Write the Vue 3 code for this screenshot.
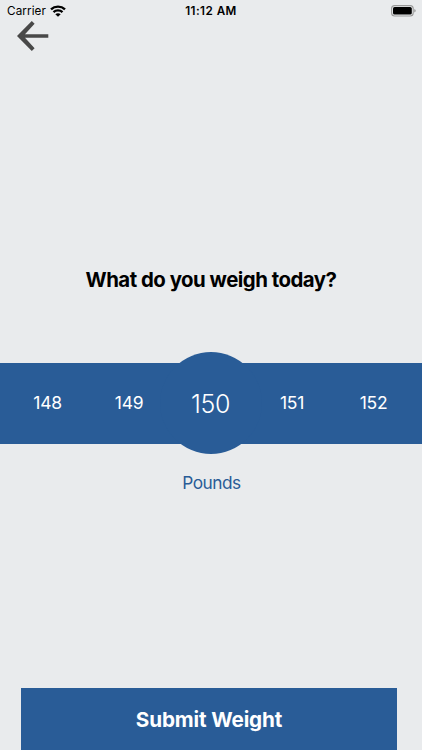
<script setup>
import { ref } from 'vue'

const weights = [148, 149, 150, 151, 152]
const selected = ref(150)
</script>

<template>
  <main class="screen">
    <header class="status">
      <div class="carrier">
        <span>Carrier</span>
        <svg class="wifi" viewBox="0 0 16 12" aria-hidden="true">
          <path d="M1 4.3C4.9.7 11.1.7 15 4.3" />
          <path d="M3.5 7.1C6 4.8 10 4.8 12.5 7.1" />
          <path class="dot" d="M8 11.8 5.3 9.2Q8 7.1 10.7 9.2Z" />
        </svg>
      </div>
      <span class="time">11:12 AM</span>
      <svg class="battery" viewBox="0 0 25 12" aria-hidden="true">
        <rect class="shell" x=".6" y=".6" width="21.6" height="10.4" rx="3" />
        <rect x="2" y="2" width="18.8" height="7.6" rx="1.6" />
        <path class="cap" d="M23.4 4.1q1.2.5 1.2 1.7t-1.2 1.7Z" />
      </svg>
    </header>
    <button class="back" aria-label="Back">
      <svg viewBox="0 0 32 30" aria-hidden="true">
        <path class="arrow" d="M14.8 0 17.6 2.8 8 13.2H31.3V16.8H8L17.6 27.2 14.8 30 0 15Z" />
      </svg>
    </button>
    <h1 class="title">What do you weigh today?</h1>
    <section class="picker">
      <div class="dial"></div>
      <div class="values">
        <button
          v-for="weight in weights"
          :key="weight"
          class="value"
          :class="{ active: weight === selected }"
          @click="selected = weight"
        >{{ weight }}</button>
      </div>
    </section>
    <p class="unit">Pounds</p>
    <button class="submit">Submit Weight</button>
  </main>
</template>

<style>
body {
  margin: 0;
  background: #e9ebed;
}
</style>

<style scoped>
.screen {
  display: flex;
  flex-direction: column;
  box-sizing: border-box;
  height: 750px;
  overflow: hidden;
  background: #e9ebed;
  color: #000;
  font-family: Inter, sans-serif;
}
button {
  padding: 0;
  border: 0;
  background: none;
  font-family: inherit;
}
.status {
  display: grid;
  grid-template-columns: 1fr auto 1fr;
  align-items: center;
  height: 22px;
  padding: 0 6px 0 7px;
  font-size: 11.7px;
}
.carrier {
  display: flex;
  align-items: center;
  gap: 4px;
  letter-spacing: 0.1px;
}
.wifi {
  width: 16px;
  height: 12px;
  margin-top: -1px;
  fill: none;
  stroke: #000;
  stroke-width: 2.4;
}
.wifi .dot {
  fill: #000;
  stroke: none;
}
.time {
  margin-right: 1px;
  font-weight: 600;
  letter-spacing: 0.45px;
}
.battery {
  justify-self: end;
  width: 25px;
  height: 12px;
  margin-top: -1px;
}
.battery .shell {
  fill: none;
  stroke: #999;
  stroke-width: 1.1;
}
.battery .cap {
  fill: #888;
}
.back {
  width: 32px;
  height: 30px;
  margin: -1px 0 0 17px;
}
.back svg {
  display: block;
  width: 32px;
  height: 30px;
}
.arrow {
  fill: #484848;
}
.title {
  margin: 214px 0 0;
  font-size: 20.4px;
  font-weight: 700;
  letter-spacing: -0.5px;
  line-height: 30px;
  text-align: center;
}
.picker {
  display: grid;
  place-items: center;
  height: 81.5px;
  margin-top: 67.5px;
  background: #295c97;
}
.dial,
.values {
  grid-area: 1 / 1;
}
.dial {
  width: 102px;
  height: 102px;
  margin: -11px 0;
  border-radius: 50%;
  background: #295c97;
}
.values {
  display: grid;
  grid-template-columns: repeat(5, 81.5px);
  align-items: center;
  margin-right: 1px;
}
.value {
  color: #fff;
  font-size: 17.5px;
  letter-spacing: -0.3px;
  line-height: 32px;
}
.value.active {
  padding-top: 1px;
  font-size: 25px;
  font-weight: 300;
}
.unit {
  margin: 24px 0 0 1px;
  color: #295c97;
  font-size: 17.3px;
  letter-spacing: -0.5px;
  line-height: 30px;
  text-align: center;
}
.submit {
  height: 62px;
  margin: auto 25px 0 21px;
  background: #295c97;
  color: #fff;
  font-size: 20.7px;
  font-weight: 700;
  letter-spacing: -0.15px;
}
</style>
